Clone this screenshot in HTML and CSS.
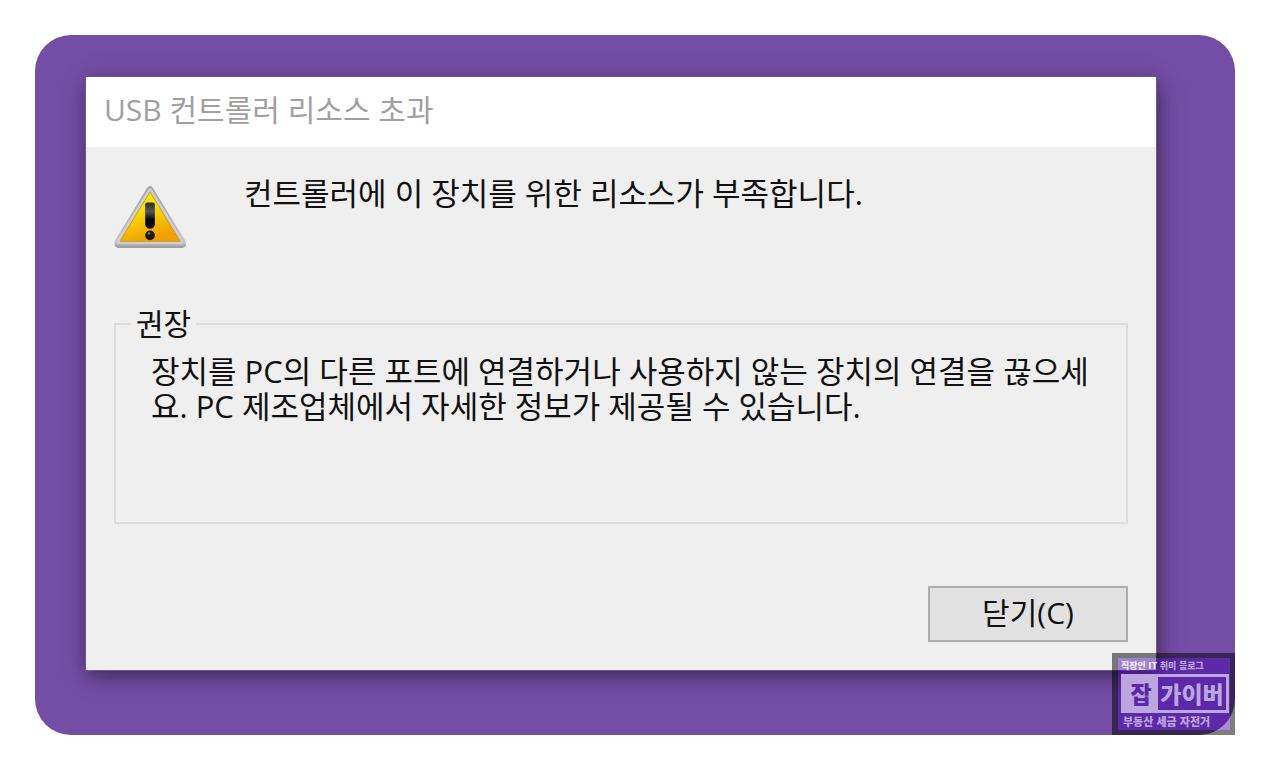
FILE: index.html
```
<!DOCTYPE html>
<html lang="ko">
  <head>
    <meta charset="utf-8" />
    <title>USB 컨트롤러 리소스 초과</title>
    <link rel="stylesheet" href="styles.css">
  </head>
  <body>
    <main class="panel">
      <section class="dialog" role="dialog" aria-labelledby="dialogTitle">
        <h1 class="dialogTitle" id="dialogTitle">USB 컨트롤러 리소스 초과</h1>
        <div class="dialogBody">
          <div class="message">
            <svg class="warningIcon" viewBox="0 0 76 68" aria-hidden="true">
              <defs>
                <linearGradient id="frameFill" x1="0" y1="0" x2="0" y2="1">
                  <stop offset="0" stop-color="#a2a2a2" />
                  <stop offset="0.9" stop-color="#c4c4c4" />
                  <stop offset="1" stop-color="#989898" />
                </linearGradient>
                <linearGradient id="yellowFill" x1="0" y1="0" x2="0.35" y2="1">
                  <stop offset="0" stop-color="#f5ee00" />
                  <stop offset="0.45" stop-color="#f9dc08" />
                  <stop offset="1" stop-color="#f0a000" />
                </linearGradient>
                <linearGradient id="markFill" x1="0" y1="0" x2="0" y2="1">
                  <stop offset="0" stop-color="#2b2b28" />
                  <stop offset="0.35" stop-color="#54565a" />
                  <stop offset="0.65" stop-color="#080808" />
                  <stop offset="1" stop-color="#111111" />
                </linearGradient>
              </defs>
              <path d="M34 4Q37 0 40 4L73 58Q76 66 69 66H5Q-1 66 1 58Z" fill="url(#frameFill)" />
              <path d="M35 6Q37 3 39 6L71 58Q73 62 68 62H6Q1 62 3 58Z" fill="#cfcfd3" />
              <path d="M37 8L68 59H6Z" fill="url(#yellowFill)" stroke="#c99a20" stroke-width="1" />
              <path d="M32 21Q32 19 34 19H40Q42 19 42 21V42Q41 46 37 46Q33 46 32 42Z" fill="url(#markFill)" />
              <circle cx="37" cy="53" r="5" fill="#1c1a12" />
              <circle cx="36" cy="51" r="1.5" fill="#6a675c" />
            </svg>
            <p class="dialogText">컨트롤러에 이 장치를 위한 리소스가 부족합니다.</p>
          </div>
          <fieldset class="advice">
            <legend>권장</legend>
            <p class="dialogText">장치를 PC의 다른 포트에 연결하거나 사용하지 않는 장치의 연결을 끊으세<br>요. PC 제조업체에서 자세한 정보가 제공될 수 있습니다.</p>
          </fieldset>
          <div class="buttons">
            <button type="button" class="closeButton">닫기(C)</button>
          </div>
        </div>
      </section>
      <!-- blog badge, sits over the corner of the panel -->
      <aside class="badge">
        <p class="badgeTop"><b>직장인 IT</b> 취미 블로그</p>
        <div class="badgeName">
          <span class="badgeFirst">잡</span>
          <span class="badgeRest">가이버</span>
        </div>
        <p class="badgeBottom">부동산 세금 자전거</p>
      </aside>
    </main>
  </body>
</html>
```
FILE: styles.css
```
* {
  box-sizing: border-box;
}

body {
  margin: 0;
  padding: 35px;
  background: #ffffff;
  color: #111111;
  font-family: "Open Sans", "Noto Sans CJK KR", sans-serif;
  font-size: 30px;
  line-height: 35px;
}

p,
h1 {
  margin: 0;
}

.panel {
  position: relative;
  padding: 42px 79px 65px 51px;
  border-radius: 36px;
  background: #744da5;
}

.dialog {
  background: #efefef;
  outline: 1px solid #69568a;
  box-shadow: 2px 6px 20px rgba(0, 0, 0, 0.5);
}

.dialogTitle {
  padding: 15px 18px 20px;
  background: #ffffff;
  color: #a0a0a0;
  font-size: 30px;
  font-weight: 400;
}

.dialogBody {
  padding: 29px 28px 28px;
}

.dialogText {
  font-size: 31px;
}

.message {
  display: flex;
  gap: 56px;
  height: 130px;
}

.warningIcon {
  width: 74px;
  height: 66px;
  margin-top: 8px;
  flex-shrink: 0;
}

.advice {
  min-width: 0;
  height: 218px;
  margin: 0;
  padding: 13px 35px;
  border: 2px solid #dcdcdc;
}

.advice legend {
  margin-left: -20px;
  padding: 0 5px;
}

.buttons {
  display: flex;
  justify-content: flex-end;
  margin-top: 62px;
}

.closeButton {
  width: 200px;
  height: 56px;
  padding: 0 0 4px;
  border: 2px solid #adadad;
  background: #e1e1e1;
  color: #111111;
  font: inherit;
}

.badge {
  position: absolute;
  right: 0;
  bottom: 0;
  width: 123px;
  padding: 0 1px 0 3px;
  border: 5px solid rgba(0, 0, 0, 0.5);
  border-left-width: 6px;
  background: rgba(65, 0, 170, 0.46);
  background-clip: padding-box;
  color: #bda5dd;
  font-family: "Noto Sans CJK KR", sans-serif;
  font-weight: 900;
  white-space: nowrap;
}

.badgeTop {
  font-size: 9px;
  line-height: 16px;
}

.badgeTop b {
  color: #f0e8fa;
  font-weight: 900;
}

.badgeBottom {
  padding-left: 2px;
  font-size: 11px;
  line-height: 17px;
}

.badgeName {
  display: flex;
  height: 39px;
  border: 3px solid #bda5dd;
  font-size: 23px;
  line-height: 32px;
}

.badgeFirst {
  width: 34px;
  background: #bda5dd;
  color: #5a28a8;
  text-align: center;
}

.badgeRest {
  flex: 1;
  background: #5a28a8;
  text-align: center;
}
```
